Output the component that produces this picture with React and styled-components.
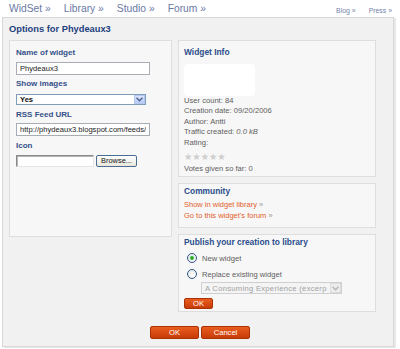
import React from "react";
import styled, { createGlobalStyle } from "styled-components";

const GlobalStyle = createGlobalStyle`
  * { box-sizing: border-box; }
  body {
    margin: 0;
    background: #fff;
    font-family: "Liberation Sans", Arial, sans-serif;
  }
`;

const Page = styled.div`
  width: 400px;
  height: 349px;
  overflow: hidden;
`;

const Nav = styled.div`
  height: 17px;
  display: flex;
  align-items: center;
  padding: 0 8px 0 9px;
`;

const MainLinks = styled.div`
  flex: 1;
  display: flex;
  gap: 13px;
`;

const MainLink = styled.span`
  font-size: 10.3px;
  line-height: 17px;
  color: #6a79a5;
`;

const SideLinks = styled.div`
  display: flex;
  gap: 13px;
  padding-top: 3px;
`;

const SideLink = styled.span`
  font-size: 6.9px;
  color: #7483ab;
`;

const Panel = styled.div`
  margin-left: 2px;
  width: 392px;
  height: 330px;
  background: #f1f1f1;
  border: 1px solid #d8d8d8;
  box-shadow: 2px 1px 0 #e8e8e8;
  padding: 5px 6px 0 6px;
`;

const PageTitle = styled.div`
  font-size: 9.3px;
  font-weight: bold;
  line-height: 12px;
  color: #1d3f7e;
  margin-bottom: 5px;
`;

const Columns = styled.div`
  display: flex;
  gap: 6px;
  align-items: flex-start;
`;

const Column = styled.div`
  display: flex;
  flex-direction: column;
  gap: ${(p) => p.$gap || 0}px;
`;

const Box = styled.div`
  width: ${(p) => p.$w}px;
  height: ${(p) => p.$h}px;
  background: #f7f7f7;
  border: 1px solid #dedede;
  padding: ${(p) => p.$pad || "1px 5px"};
`;

const Label = styled.div`
  font-size: 8px;
  font-weight: bold;
  line-height: 10px;
  color: #34518a;
  margin-top: ${(p) => p.$mt || 0}px;
`;

const TextInput = styled.input`
  display: block;
  width: 134px;
  height: 13px;
  margin: ${(p) => p.$mt || 0}px 0 0 0;
  padding: 0 3px;
  border: 1px solid #a7adb3;
  background: #fff;
  font-family: "Liberation Sans", Arial, sans-serif;
  font-size: 7.6px;
  color: #222;
  outline: none;
`;

const SelectBox = styled.div`
  width: ${(p) => p.$w}px;
  height: ${(p) => p.$h}px;
  margin-top: ${(p) => p.$mt || 0}px;
  margin-left: ${(p) => p.$ml || 0}px;
  display: flex;
  align-items: center;
  justify-content: space-between;
  border: 1px solid ${(p) => (p.$disabled ? "#cfcfcf" : "#7f9db9")};
  background: ${(p) => (p.$disabled ? "#f4f4f4" : "#fff")};
  padding-left: 3px;
  font-size: 7.6px;
  font-weight: ${(p) => (p.$disabled ? "normal" : "bold")};
  color: ${(p) => (p.$disabled ? "#a0a0a0" : "#111")};
  letter-spacing: ${(p) => (p.$disabled ? "0.3px" : "0")};
  white-space: nowrap;
  overflow: hidden;
`;

const SelectArrow = styled.div`
  flex: none;
  width: 11px;
  height: 100%;
  border: 1px solid ${(p) => (p.$disabled ? "#dcdcdc" : "#b7c8f0")};
  background: ${(p) =>
    p.$disabled ? "#ececec" : "linear-gradient(#dbe6fe, #b6cbf8)"};
  display: flex;
  align-items: center;
  justify-content: center;
`;

const FileRow = styled.div`
  display: flex;
  gap: 2px;
  margin-top: 4px;
`;

const FileField = styled.div`
  width: 78px;
  height: 12px;
  background: #fff;
  border: 1px solid #8a8a8a;
  border-right-color: #e6e6e6;
  border-bottom-color: #e6e6e6;
  box-shadow: inset 1px 1px 0 #b5b5b5;
`;

const BrowseButton = styled.div`
  width: 41px;
  height: 12px;
  border: 1px solid #4b6c93;
  border-radius: 2px;
  background: linear-gradient(#ffffff, #e9e7dc);
  font-size: 7.4px;
  line-height: 10px;
  text-align: center;
  color: #111;
`;

const BoxTitle = styled.div`
  font-size: 8.4px;
  font-weight: bold;
  line-height: ${(p) => p.$lh || 12}px;
  color: #2a4d8c;
`;

const Thumb = styled.div`
  width: 71px;
  height: 32px;
  margin-top: 6px;
  background: #fff;
  border-radius: 4px;
`;

const InfoLine = styled.div`
  font-size: 7.6px;
  line-height: 10.4px;
  color: #606060;
  white-space: nowrap;
  em { font-style: italic; }
`;

const Stars = styled.div`
  font-family: "DejaVu Sans", sans-serif;
  font-size: 9.3px;
  line-height: 15px;
  color: #cfcfcf;
  padding-top: 1px;
`;

const LinkList = styled.div`
  margin-top: 3px;
`;

const OrangeLink = styled.div`
  font-size: 7.5px;
  line-height: 10.5px;
  color: #e2602a;
  span { color: #9a9a9a; }
`;

const RadioRow = styled.div`
  display: flex;
  align-items: center;
  gap: 5px;
  height: 12px;
  margin-top: 4px;
  margin-left: 3px;
  font-size: 7.6px;
  color: #606060;
`;

const Radio = styled.span`
  width: 10px;
  height: 10px;
  border-radius: 50%;
  border: 1px solid #2a5a8c;
  background: radial-gradient(circle at 65% 65%, #ffffff 0%, #e4e3dc 90%);
  display: flex;
  align-items: center;
  justify-content: center;
  &::after {
    content: "";
    width: 4px;
    height: 4px;
    border-radius: 50%;
    background: ${(p) => (p.$checked ? "#2cae2c" : "transparent")};
  }
`;

const OrangeButton = styled.div`
  width: ${(p) => p.$w}px;
  height: ${(p) => p.$h}px;
  margin-top: ${(p) => p.$mt || 0}px;
  background: linear-gradient(#ea5d1f, #c73b08);
  border: 1px solid #a83106;
  border-radius: 2px;
  color: #fff;
  font-size: 7.6px;
  line-height: ${(p) => p.$h - 2}px;
  text-align: center;
`;

const ButtonBar = styled.div`
  display: flex;
  justify-content: center;
  gap: 2px;
  margin-top: 14px;
  padding-left: 4px;
`;

function Arrow({ color }) {
  return (
    <svg width="7" height="5" viewBox="0 0 7 5">
      <path d="M0.5 0.8 L3.5 3.8 L6.5 0.8" fill="none" stroke={color} strokeWidth="1.4" />
    </svg>
  );
}

export default function App() {
  return (
    <Page>
      <GlobalStyle />
      <Nav>
        <MainLinks>
          <MainLink>WidSet »</MainLink>
          <MainLink>Library »</MainLink>
          <MainLink>Studio »</MainLink>
          <MainLink>Forum »</MainLink>
        </MainLinks>
        <SideLinks>
          <SideLink>Blog »</SideLink>
          <SideLink>Press »</SideLink>
        </SideLinks>
      </Nav>
      <Panel>
        <PageTitle>Options for Phydeaux3</PageTitle>
        <Columns>
          <Box $w={163} $h={197} $pad="7px 6px">
            <Label>Name of widget</Label>
            <TextInput $mt={4} readOnly defaultValue="Phydeaux3" />
            <Label $mt={4}>Show images</Label>
            <SelectBox $w={130} $h={11} $mt={5}>
              Yes
              <SelectArrow>
                <Arrow color="#4d6185" />
              </SelectArrow>
            </SelectBox>
            <Label $mt={5}>RSS Feed URL</Label>
            <TextInput $mt={3} readOnly defaultValue="http://phydeaux3.blogspot.com/feeds/posts/default" />
            <Label $mt={5}>Icon</Label>
            <FileRow>
              <FileField />
              <BrowseButton>Browse...</BrowseButton>
            </FileRow>
          </Box>
          <Column $gap={6}>
            <Box $w={198} $h={137} $pad="6px 5px 0 5px">
              <BoxTitle $lh={11}>Widget Info</BoxTitle>
              <Thumb />
              <InfoLine>User count: 84</InfoLine>
              <InfoLine>Creation date: 09/20/2006</InfoLine>
              <InfoLine>Author: Antti</InfoLine>
              <InfoLine>
                Traffic created: <em>0.0 kB</em>
              </InfoLine>
              <InfoLine>Rating:</InfoLine>
              <Stars>★★★★★</Stars>
              <InfoLine>Votes given so far: 0</InfoLine>
            </Box>
            <Box $w={198} $h={45}>
              <BoxTitle>Community</BoxTitle>
              <LinkList>
                <OrangeLink>
                  Show in widget library <span>»</span>
                </OrangeLink>
                <OrangeLink>
                  Go to this widget's forum <span>»</span>
                </OrangeLink>
              </LinkList>
            </Box>
            <Box $w={198} $h={78}>
              <BoxTitle>Publish your creation to library</BoxTitle>
              <RadioRow>
                <Radio $checked />
                New widget
              </RadioRow>
              <RadioRow>
                <Radio />
                Replace existing widget
              </RadioRow>
              <SelectBox $w={141} $h={12} $mt={2} $ml={17} $disabled>
                A Consuming Experience (excerp
                <SelectArrow $disabled>
                  <Arrow color="#b5b5b5" />
                </SelectArrow>
              </SelectBox>
              <OrangeButton $w={29} $h={11} $mt={4}>
                OK
              </OrangeButton>
            </Box>
          </Column>
        </Columns>
        <ButtonBar>
          <OrangeButton $w={49} $h={13}>
            OK
          </OrangeButton>
          <OrangeButton $w={49} $h={13}>
            Cancel
          </OrangeButton>
        </ButtonBar>
      </Panel>
    </Page>
  );
}
